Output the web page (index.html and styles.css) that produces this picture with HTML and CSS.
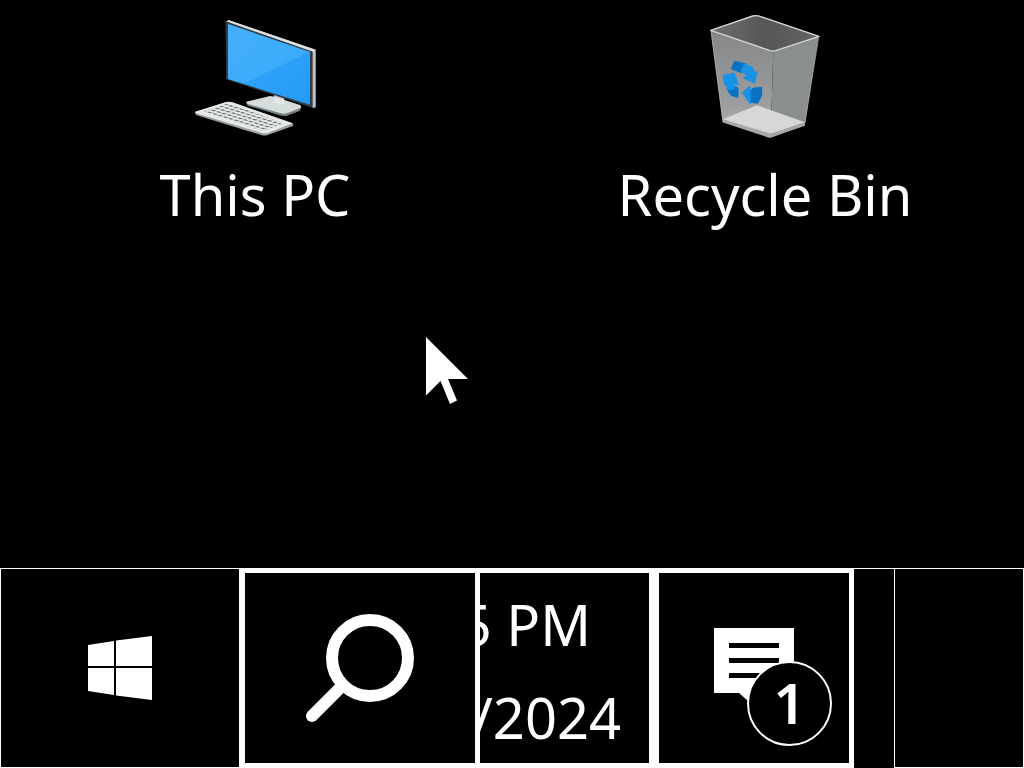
FILE: index.html
```html
<!DOCTYPE html>
<html lang="en">
<head>
<meta charset="utf-8">
<title>Desktop</title>
<link rel="stylesheet" href="styles.css">
</head>
<body>
<main class="desktop">
  <a class="shortcut" href="#this-pc">
    <svg class="shortcut-icon" viewBox="0 0 450 420" aria-hidden="true">
      <defs>
        <linearGradient id="screen" x1="0" y1="0" x2="1" y2="1"><stop offset="0" stop-color="#39a9fb"/><stop offset="1" stop-color="#249bf7"/></linearGradient>
        <pattern id="keys" width="16" height="12" patternUnits="userSpaceOnUse" patternTransform="matrix(1 .3 -1 .5 0 0)"><path d="M2 3h11" stroke="#6c7072" stroke-width="5"/></pattern>
      </defs>
      <path d="M282 248l31 10v30l-31-8z" fill="#c4c9cb"/>
      <path d="M198 276l70-17q7-1 17 2l74 24q8 4 2 13l-2 5-38 14q-10 3-22-1l-96-29z" fill="#768184"/>
      <path d="M198 276l70-17q7-1 17 2l74 24q8 4 2 9l-40 16q-10 3-22-1l-96-27z" fill="#d5dcdc"/>
      <path d="M281 260l31 8v18l-31-8z" fill="#e4e8e8"/>
      <path d="M137 34l10-3 260 88v173l-8 2-261-86z" fill="#303d45"/>
      <path d="M139 34l8-3 260 88v173l-9 2V124z" fill="#bdc2c3"/>
      <path d="M139 34l8-3 260 88-8 6z" fill="#dadddd"/>
      <path d="M144 42l246 84v158l-246-77z" fill="url(#screen)"/>
      <path d="M144 42l246 84-200 95-46-14z" fill="#5cbdff" opacity=".35"/>
      <path d="M45 307l93-30q10-2 20 1l178 61q5 3 3 9l-76 27q-9 3-20 0L48 315z" fill="#9ba0a2"/>
      <path d="M45 305l93-29q10-2 20 1l180 63-75 29q-9 3-20-1L46 309z" fill="#e6e9e9"/>
      <path d="M72 304l67-22q6-2 14 1l158 57-56 21q-7 2-17-1z" fill="url(#keys)"/>
    </svg>
    <span class="shortcut-name">This PC</span>
  </a>
  <a class="shortcut" href="#recycle-bin">
    <svg class="shortcut-icon" viewBox="0 15 450 420" aria-hidden="true">
      <defs>
        <linearGradient id="side" x1="0" y1="0" x2="0" y2="1"><stop offset="0" stop-color="#858789"/><stop offset=".65" stop-color="#999b9c"/><stop offset="1" stop-color="#b1b2b3"/></linearGradient>
        <linearGradient id="inside" x1="0" y1="0" x2="1" y2="0"><stop offset="0" stop-color="#707070"/><stop offset=".5" stop-color="#565656"/><stop offset="1" stop-color="#646464"/></linearGradient>
      </defs>
      <path d="M62 76l188 61-8 261-144-46z" fill="url(#side)"/>
      <path d="M386 93l-136 44-8 261 103-40z" fill="#8b8e8f"/>
      <path d="M98 343l103-42 144 51-101 34z" fill="#d7d7d8"/>
      <path d="M97 344l147 44 101-36v10l-100 35-8 1-139-46z" fill="#a6a8a9"/>
      <path d="M62 76l126-43q12-3 22 1l177 60-130 43q-11 3-22-2z" fill="url(#inside)" stroke="#d4d5d5" stroke-width="4" stroke-linejoin="round"/>
      <path d="M63 78l35 265M386 96l-41 257" fill="none" stroke="#b6b7b7" stroke-width="2"/>
      <g fill="#0873c6" stroke="#0873c6" stroke-width="3" stroke-linejoin="round">
        <path d="M134 169l34 8-14 26-30-12z"/>
        <path d="M111 250l20-6 13 4v29l-18-5q-8-3-15-22z"/>
      </g>
      <g fill="#1993e8" stroke="#1993e8" stroke-width="3" stroke-linejoin="round">
        <path d="M164 177l22 9 5 12 11 4-9 32-33-15 11-7-18-14z"/>
        <path d="M99 212l33-8 14 36-12-4-2 16-17 2-11-16z"/>
        <path d="M157 263l22-19 3 14 28-3-26 32-3 10z"/>
      </g>
      <path d="M182 256q5-12 34-10l1 23-13 27-21-3z" fill="#0873c6"/>
    </svg>
    <span class="shortcut-name">Recycle Bin</span>
  </a>
  <svg class="cursor" viewBox="0 0 42 67" aria-hidden="true"><path d="M0 0L42 42H22L31 63.500L24 67L14.500 44L0 58.500z" fill="#fff"/></svg>
</main>
<footer class="taskbar">
  <button class="task start" aria-label="Start">
    <svg class="start-icon" viewBox="0 0 64 64" aria-hidden="true"><path d="M0 9l26-4v25H0zM28 4.500L64 0v30H28zM0 32h26v27L0 55zM28 32h36v32l-36-4.500z" fill="#fff"/></svg>
  </button>
  <button class="task search" aria-label="Search">
    <svg class="search-icon" viewBox="0 0 108 108" aria-hidden="true"><g fill="none" stroke="#fff" stroke-width="12"><circle cx="64" cy="44" r="38"/><path d="M37 71L6 102" stroke-linecap="round"/></g></svg>
  </button>
  <button class="task clock">
    <span class="time">5 PM</span>
    <span class="date">/2024</span>
  </button>
  <button class="task notices" aria-label="Notifications, 1 new">
    <span class="notice-mark">
      <svg class="notice-icon" viewBox="0 0 80 80" aria-hidden="true"><path d="M0 0h80v65H50v15H39L33 72L25 65H0z" fill="#fff"/><path d="M15 17.500h50M15 32.500h50M15 47.500h50" stroke="#000" stroke-width="5"/></svg>
      <span class="badge">1</span>
    </span>
  </button>
  <button class="task show-desktop" aria-label="Show desktop"></button>
</footer>
</body>
</html>
```
FILE: styles.css
```css
* { box-sizing: border-box; }

body {
  margin: 0;
  min-height: 100vh;
  display: flex;
  flex-direction: column;
  background: #000;
  color: #fff;
  font-family: "Noto Sans", "Open Sans", sans-serif;
  font-size: 56px;
}

.desktop {
  position: relative;
  flex: 1;
  display: grid;
  grid-template-columns: 1fr 1fr;
  align-items: start;
  padding: 10px 4px 0 0;
}

.shortcut {
  display: flex;
  flex-direction: column;
  align-items: center;
  color: inherit;
  text-decoration: none;
}

.shortcut-icon { width: 150px; height: 140px; }

.shortcut-name { line-height: 88px; white-space: nowrap; }

.cursor {
  position: absolute;
  left: 426px;
  top: 337px;
  width: 42px;
  height: 67px;
}

.taskbar {
  display: flex;
  height: 200px;
  border-top: 1px solid #fff;
}

.task {
  display: flex;
  align-items: center;
  justify-content: center;
  min-width: 0;
  padding: 0;
  border: 0 solid #fff;
  border-radius: 0;
  background: #000;
  color: inherit;
  font: inherit;
}

.start { flex: 239 1 239px; border-width: 0 0 1px 1px; }
.start-icon { width: 64px; height: 64px; }

.search { flex: 241 1 241px; border-width: 4px 5px 5px 6px; }
.search-icon { width: 108px; height: 108px; }

.clock {
  flex: 174 1 174px;
  flex-direction: column;
  align-items: flex-end;
  overflow: hidden;
  padding-top: 6px;
  border-width: 4px 5px 5px 0;
  line-height: 93px;
  white-space: nowrap;
}

.time { padding-right: 58px; }
.date { padding-right: 28px; }

.notices {
  flex: 200 1 200px;
  border-width: 4px 5px 5px;
}

.notice-mark { position: relative; display: block; width: 80px; height: 80px; }
.notice-icon { display: block; width: 80px; height: 80px; }

.badge {
  position: absolute;
  left: 33px;
  top: 33px;
  width: 85px;
  height: 85px;
  border: 2px solid #fff;
  border-radius: 50%;
  background: #000;
  font-weight: 600;
  line-height: 78px;
  text-align: center;
}

.show-desktop {
  flex: 130 1 130px;
  margin-left: 40px;
  border-width: 0 1px 1px;
}
```
